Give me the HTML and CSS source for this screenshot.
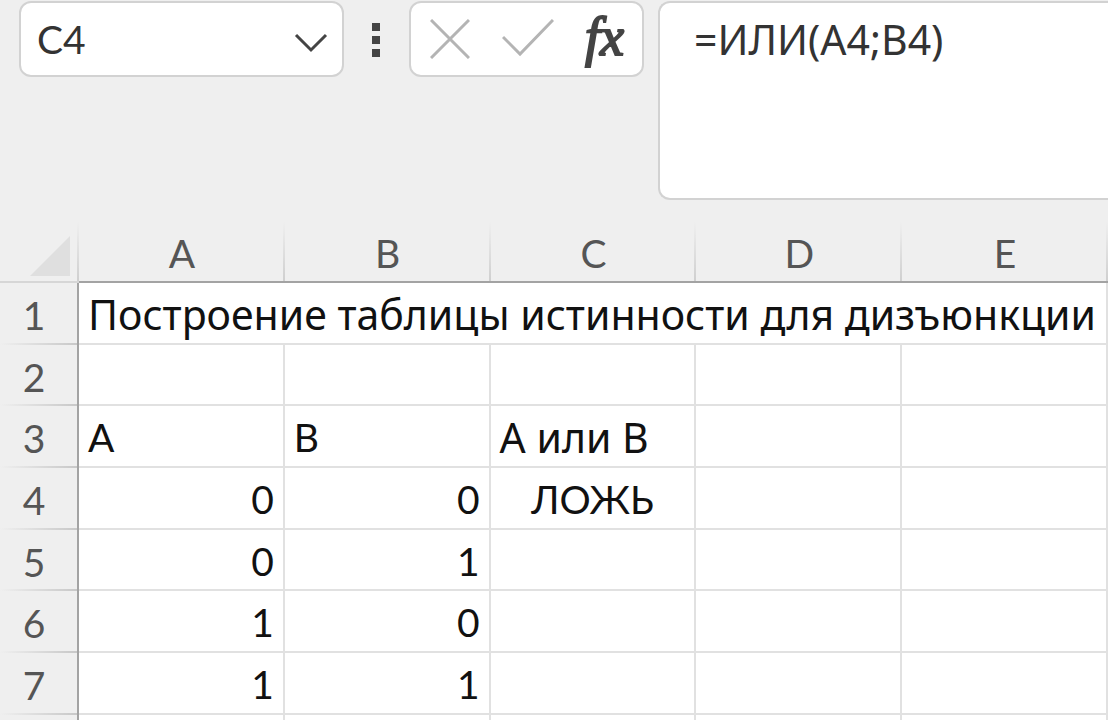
FILE: index.html
```html
<!DOCTYPE html>
<html lang="ru">
<head>
    <meta charset="UTF-8">
    <meta name="viewport" content="width=device-width, initial-scale=1.0">
    <title>Построение таблицы истинности</title>
    <link rel="stylesheet" href="styles.css">
</head>
<body>
    <div class="formula-bar">
        <div class="name-box">
            <input class="name-input" type="text" value="C4" aria-label="Имя ячейки">
            <button class="icon-button" type="button" aria-label="Список имён">
                <svg width="34" height="28" viewBox="0 0 34 28">
                    <path d="M2 10 L17 25 L32 10" fill="none" stroke="#444" stroke-width="3"/>
                </svg>
            </button>
        </div>
        <div class="grip">
            <span></span>
            <span></span>
            <span></span>
        </div>
        <div class="actions">
            <button class="icon-button" type="button" aria-label="Отмена">
                <svg width="40" height="40" viewBox="0 0 40 40">
                    <path d="M1 1 L39 39 M39 1 L1 39" fill="none" stroke="#b4b4b4" stroke-width="3"/>
                </svg>
            </button>
            <button class="icon-button" type="button" aria-label="Ввод">
                <svg width="52" height="40" viewBox="0 0 52 40">
                    <path d="M1 18 L18 35 L51 1" fill="none" stroke="#b4b4b4" stroke-width="3"/>
                </svg>
            </button>
            <button class="icon-button fx" type="button" aria-label="Вставить функцию">fx</button>
        </div>
        <textarea class="formula-input" aria-label="Строка формул">=ИЛИ(A4;B4)</textarea>
    </div>

    <div class="sheet-view">
        <table class="sheet">
            <thead>
                <tr>
                    <th class="corner">
                        <svg width="40" height="40" viewBox="0 0 40 40">
                            <path d="M40 0 V40 H0 Z" fill="#dfdfdf"/>
                        </svg>
                    </th>
                    <th>A</th>
                    <th>B</th>
                    <th>C</th>
                    <th>D</th>
                    <th>E</th>
                </tr>
            </thead>
            <tbody>
                <tr>
                    <th>1</th>
                    <td class="label" colspan="5">Построение таблицы истинности для дизъюнкции</td>
                </tr>
                <tr>
                    <th>2</th>
                    <td></td>
                    <td></td>
                    <td></td>
                    <td></td>
                    <td></td>
                </tr>
                <tr>
                    <th>3</th>
                    <td>A</td>
                    <td>B</td>
                    <td class="label">A или B</td>
                    <td></td>
                    <td></td>
                </tr>
                <tr>
                    <th>4</th>
                    <td class="number">0</td>
                    <td class="number">0</td>
                    <td class="logical">ЛОЖЬ</td>
                    <td></td>
                    <td></td>
                </tr>
                <tr>
                    <th>5</th>
                    <td class="number">0</td>
                    <td class="number">1</td>
                    <td></td>
                    <td></td>
                    <td></td>
                </tr>
                <tr>
                    <th>6</th>
                    <td class="number">1</td>
                    <td class="number">0</td>
                    <td></td>
                    <td></td>
                    <td></td>
                </tr>
                <tr>
                    <th>7</th>
                    <td class="number">1</td>
                    <td class="number">1</td>
                    <td></td>
                    <td></td>
                    <td></td>
                </tr>
                <tr>
                    <th></th>
                    <td></td>
                    <td></td>
                    <td></td>
                    <td></td>
                    <td></td>
                </tr>
            </tbody>
        </table>
    </div>
</body>
</html>
```

FILE: styles.css
```css
* {
    box-sizing: border-box;
}
body {
    display: flex;
    flex-direction: column;
    margin: 0;
    height: 100vh;
    background-color: #efefef;
    font-family: Lato, "Open Sans", sans-serif;
    font-size: 39px;
    color: #111;
}

/* Formula bar */
.formula-bar {
    display: flex;
    align-items: flex-start;
    padding: 1px 0 22px 19px;
}
.name-box,
.actions {
    display: flex;
    align-items: center;
    height: 76px;
    background-color: white;
    border: 2px solid #d2d2d2;
    border-radius: 12px;
}
.name-box {
    width: 325px;
    padding: 0 14px 0 16px;
}
.name-input {
    flex: 1;
    min-width: 0;
    padding: 0;
    border: none;
    outline: none;
    background: none;
    font: inherit;
    color: #333;
}
.icon-button {
    display: flex;
    padding: 0;
    border: none;
    background: none;
    cursor: pointer;
}
.grip {
    display: flex;
    flex-direction: column;
    gap: 5px;
    padding: 22px 29px 0 28px;
}
.grip span {
    width: 8px;
    height: 8px;
    background-color: #444;
}
.actions {
    justify-content: space-between;
    width: 235px;
    padding: 0 18px 0 19px;
}
.fx {
    padding-bottom: 4px;
    font-family: "Liberation Serif", serif;
    font-size: 54px;
    font-style: italic;
    line-height: 60px;
    color: #444;
    -webkit-text-stroke: 2px #444;
}
.formula-input {
    flex: 1;
    height: 199px;
    margin-left: 14px;
    padding: 12px 34px;
    border: 2px solid #d2d2d2;
    border-right: none;
    border-radius: 12px 0 0 12px;
    outline: none;
    resize: none;
    background-color: white;
    font-family: "Noto Sans", sans-serif;
    font-size: 41px;
    line-height: 48px;
    color: #333;
}

/* Sheet */
.sheet-view {
    flex: 1;
    min-height: 0;
    overflow: hidden;
}
.sheet {
    width: 100%;
    table-layout: fixed;
    border-collapse: separate;
    border-spacing: 0;
    line-height: 48px;
}
.sheet th,
.sheet td {
    height: 62px;
    padding: 2px 9px 0;
    font-weight: normal;
    text-align: left;
    white-space: nowrap;
}
.sheet td {
    background-color: white;
    border-right: 2px solid #e1e1e1;
    border-bottom: 2px solid #e1e1e1;
}
.sheet th {
    color: #555;
    text-align: center;
}
.sheet thead th {
    height: 61px;
    border-bottom: 2px solid #a3a3a3;
    background: linear-gradient(to bottom, #efefef, #cfcfcf) right / 2px 100% no-repeat;
}
.sheet .corner {
    width: 79px;
    padding: 8px 9px 0 0;
    border-bottom-color: #d6d6d6;
}
.corner svg {
    display: block;
    margin-left: auto;
}
/* row numbers, the separator fades out to the left */
.sheet tbody th {
    padding: 2px 9px 0 0;
    border-right: 2px solid #a3a3a3;
    background: linear-gradient(to right, #efefef, #c8c8c8) bottom / 100% 2px no-repeat;
}
.sheet tbody tr:nth-child(3n + 2) > * {
    height: 61px;
}
.sheet .label {
    font-family: "Noto Sans", sans-serif;
    font-size: 41px;
}
.sheet .number {
    text-align: right;
}
.sheet .logical {
    text-align: center;
}
```
